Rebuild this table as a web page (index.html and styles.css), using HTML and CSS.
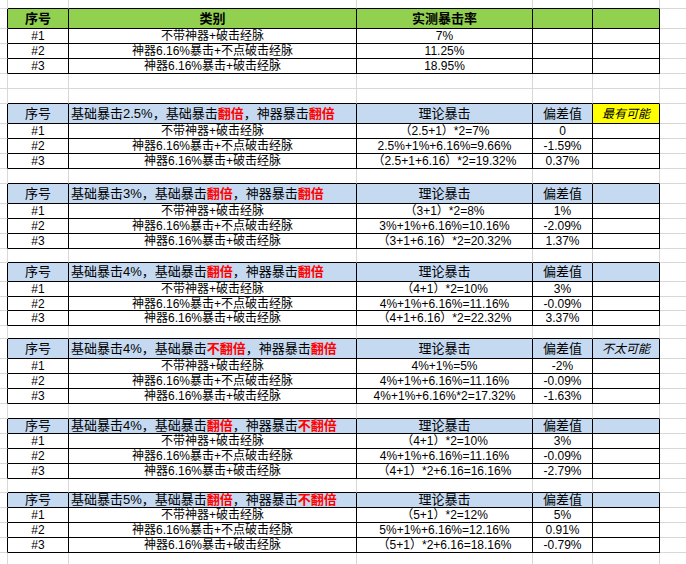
FILE: index.html
```html
<!DOCTYPE html>
<html lang="zh">
<head>
<meta charset="utf-8">
<title>暴击率对比</title>
<link rel="stylesheet" href="styles.css">
</head>
<body>
<div class="sheet">
  <div class="row h9 pre"><div></div><div></div><div></div><div></div><div></div><div></div><div></div></div>
  <div class="row h20 tbl head green"><div></div><div class="b">序号</div><div class="b">类别</div><div class="b">实测暴击率</div><div></div><div></div><div></div></div>
  <div class="row h15 tbl"><div></div><div>#1</div><div>不带神器+破击经脉</div><div>7%</div><div></div><div></div><div></div></div>
  <div class="row h15 tbl"><div></div><div>#2</div><div>神器6.16%暴击+不点破击经脉</div><div>11.25%</div><div></div><div></div><div></div></div>
  <div class="row h15 tbl"><div></div><div>#3</div><div>神器6.16%暴击+破击经脉</div><div>18.95%</div><div></div><div></div><div></div></div>
  <div class="row h15"><div></div><div></div><div></div><div></div><div></div><div></div><div></div></div>
  <div class="row h15 pre"><div></div><div></div><div></div><div></div><div></div><div></div><div></div></div>

  <div class="row h20 tbl head blue"><div></div><div>序号</div><div class="title">基础暴击2.5%，基础暴击<span class="red">翻倍</span>，神器暴击<span class="red">翻倍</span></div><div>理论暴击</div><div>偏差值</div><div class="note yellow">最有可能</div><div></div></div>
  <div class="row h15 tbl"><div></div><div>#1</div><div>不带神器+破击经脉</div><div>（2.5+1）*2=7%</div><div>0</div><div></div><div></div></div>
  <div class="row h15 tbl"><div></div><div>#2</div><div>神器6.16%暴击+不点破击经脉</div><div>2.5%+1%+6.16%=9.66%</div><div>-1.59%</div><div></div><div></div></div>
  <div class="row h15 tbl"><div></div><div>#3</div><div>神器6.16%暴击+破击经脉</div><div>（2.5+1+6.16）*2=19.32%</div><div>0.37%</div><div></div><div></div></div>
  <div class="row h15 pre"><div></div><div></div><div></div><div></div><div></div><div></div><div></div></div>

  <div class="row h20 tbl head blue"><div></div><div>序号</div><div class="title">基础暴击3%，基础暴击<span class="red">翻倍</span>，神器暴击<span class="red">翻倍</span></div><div>理论暴击</div><div>偏差值</div><div></div><div></div></div>
  <div class="row h15 tbl"><div></div><div>#1</div><div>不带神器+破击经脉</div><div>（3+1）*2=8%</div><div>1%</div><div></div><div></div></div>
  <div class="row h15 tbl"><div></div><div>#2</div><div>神器6.16%暴击+不点破击经脉</div><div>3%+1%+6.16%=10.16%</div><div>-2.09%</div><div></div><div></div></div>
  <div class="row h15 tbl"><div></div><div>#3</div><div>神器6.16%暴击+破击经脉</div><div>（3+1+6.16）*2=20.32%</div><div>1.37%</div><div></div><div></div></div>
  <div class="row h14 pre"><div></div><div></div><div></div><div></div><div></div><div></div><div></div></div>

  <div class="row h19 tbl head blue"><div></div><div>序号</div><div class="title">基础暴击4%，基础暴击<span class="red">翻倍</span>，神器暴击<span class="red">翻倍</span></div><div>理论暴击</div><div>偏差值</div><div></div><div></div></div>
  <div class="row h15 tbl"><div></div><div>#1</div><div>不带神器+破击经脉</div><div>（4+1）*2=10%</div><div>3%</div><div></div><div></div></div>
  <div class="row h14 tbl"><div></div><div>#2</div><div>神器6.16%暴击+不点破击经脉</div><div>4%+1%+6.16%=11.16%</div><div>-0.09%</div><div></div><div></div></div>
  <div class="row h15 tbl"><div></div><div>#3</div><div>神器6.16%暴击+破击经脉</div><div>（4+1+6.16）*2=22.32%</div><div>3.37%</div><div></div><div></div></div>
  <div class="row h13 pre"><div></div><div></div><div></div><div></div><div></div><div></div><div></div></div>

  <div class="row h20 tbl head blue"><div></div><div>序号</div><div class="title">基础暴击4%，基础暴击<span class="red">不翻倍</span>，神器暴击<span class="red">翻倍</span></div><div>理论暴击</div><div>偏差值</div><div class="note">不太可能</div><div></div></div>
  <div class="row h15 tbl"><div></div><div>#1</div><div>不带神器+破击经脉</div><div>4%+1%=5%</div><div>-2%</div><div></div><div></div></div>
  <div class="row h15 tbl"><div></div><div>#2</div><div>神器6.16%暴击+不点破击经脉</div><div>4%+1%+6.16%=11.16%</div><div>-0.09%</div><div></div><div></div></div>
  <div class="row h15 tbl"><div></div><div>#3</div><div>神器6.16%暴击+破击经脉</div><div>4%+1%+6.16%*2=17.32%</div><div>-1.63%</div><div></div><div></div></div>
  <div class="row h15 pre"><div></div><div></div><div></div><div></div><div></div><div></div><div></div></div>

  <div class="row h15 tbl head blue"><div></div><div>序号</div><div class="title">基础暴击4%，基础暴击<span class="red">翻倍</span>，神器暴击<span class="red">不翻倍</span></div><div>理论暴击</div><div>偏差值</div><div></div><div></div></div>
  <div class="row h15 tbl"><div></div><div>#1</div><div>不带神器+破击经脉</div><div>（4+1）*2=10%</div><div>3%</div><div></div><div></div></div>
  <div class="row h15 tbl"><div></div><div>#2</div><div>神器6.16%暴击+不点破击经脉</div><div>4%+1%+6.16%=11.16%</div><div>-0.09%</div><div></div><div></div></div>
  <div class="row h15 tbl"><div></div><div>#3</div><div>神器6.16%暴击+破击经脉</div><div>（4+1）*2+6.16=16.16%</div><div>-2.79%</div><div></div><div></div></div>
  <div class="row h14 pre"><div></div><div></div><div></div><div></div><div></div><div></div><div></div></div>

  <div class="row h15 tbl head blue"><div></div><div>序号</div><div class="title">基础暴击5%，基础暴击<span class="red">翻倍</span>，神器暴击<span class="red">不翻倍</span></div><div>理论暴击</div><div>偏差值</div><div></div><div></div></div>
  <div class="row h15 tbl"><div></div><div>#1</div><div>不带神器+破击经脉</div><div>（5+1）*2=12%</div><div>5%</div><div></div><div></div></div>
  <div class="row h15 tbl"><div></div><div>#2</div><div>神器6.16%暴击+不点破击经脉</div><div>5%+1%+6.16%=12.16%</div><div>0.91%</div><div></div><div></div></div>
  <div class="row h15 tbl"><div></div><div>#3</div><div>神器6.16%暴击+破击经脉</div><div>（5+1）*2+6.16=18.16%</div><div>-0.79%</div><div></div><div></div></div>
  <div class="row h15"><div></div><div></div><div></div><div></div><div></div><div></div><div></div></div>
</div>
</body>
</html>
```
FILE: styles.css
```css
html, body {
  margin: 0;
  padding: 0;
  background: #ffffff;
}

.sheet {
  display: flex;
  flex-direction: column;
  width: 687px;
  overflow: hidden;
  font-family: "Liberation Sans", "Noto Sans CJK SC", sans-serif;
  font-size: 12px;
  color: #000000;
}

.row {
  display: grid;
  grid-template-columns: 8px 61px 288px 176px 60px 67px 27px;
  flex: none;
}

.row > div {
  box-sizing: border-box;
  border-right: 1px solid #d8d8d8;
  border-bottom: 1px solid #d8d8d8;
  display: flex;
  align-items: center;
  justify-content: center;
  white-space: nowrap;
  line-height: 12px;
  min-width: 0;
}

.h9 { height: 9px; }
.h13 { height: 13px; }
.h14 { height: 14px; }
.h15 { height: 15px; }
.h19 { height: 19px; }
.h20 { height: 20px; }

/* table cells: black grid */
.tbl > div:first-child {
  border-right-color: #000000;
}
.tbl > div:nth-child(n+2):nth-child(-n+6) {
  border-right-color: #000000;
  border-bottom-color: #000000;
}
.pre > div:nth-child(n+2):nth-child(-n+6) {
  border-bottom-color: #000000;
}

.head > div {
  font-size: 13px;
}
.green > div:nth-child(n+2):nth-child(-n+6) {
  background: #92d050;
}
.blue > div:nth-child(n+2):nth-child(-n+6) {
  background: #c5d9f1;
}
.blue > div.note.yellow:nth-child(6) {
  background: #ffff00;
}

.b {
  font-weight: bold;
}

.head > .title {
  justify-content: flex-start;
  padding-left: 2px;
}

.red {
  color: #ff0000;
  font-weight: bold;
}

.head > .note {
  font-style: italic;
  font-size: 12px;
}
```
